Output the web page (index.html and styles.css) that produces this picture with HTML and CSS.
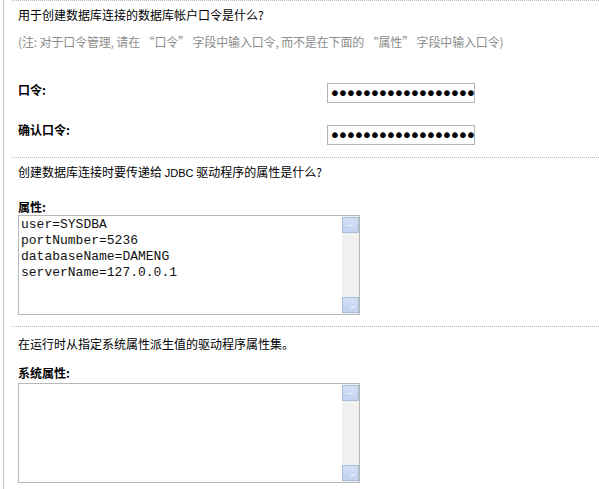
FILE: index.html
```html
<!DOCTYPE html>
<html lang="zh-CN">
<head>
<meta charset="utf-8">
<title>数据库连接属性</title>
<link rel="stylesheet" href="styles.css">
</head>
<body>
<div class="panel">
  <section class="sec sec-auth">
    <p class="question">用于创建数据库连接的数据库帐户口令是什么?</p>
    <p class="note">(注: 对于口令管理, 请在 “口令” 字段中输入口令, 而不是在下面的 “属性” 字段中输入口令)</p>
    <div class="field-row row-first">
      <label class="label" for="pw1">口令:</label>
      <input class="pw" id="pw1" type="password" value="aaaaaaaaaaaaaaaaaa">
    </div>
    <div class="field-row row-second">
      <label class="label" for="pw2">确认口令:</label>
      <input class="pw" id="pw2" type="password" value="aaaaaaaaaaaaaaaaaa">
    </div>
  </section>
  <section class="sec sec-props">
    <p class="question">创建数据库连接时要传递给 <span class="latin">JDBC</span> 驱动程序的属性是什么?</p>
    <div class="label block-label">属性:</div>
    <div class="textbox">
      <div class="textbox-content">user=SYSDBA
portNumber=5236
databaseName=DAMENG
serverName=127.0.0.1</div>
      <div class="scrollbar">
        <div class="sb-btn sb-up"><span class="arrow-up"></span></div>
        <div class="sb-track"></div>
        <div class="sb-btn sb-down"><span class="arrow-down"></span></div>
      </div>
    </div>
  </section>
  <section class="sec sec-sys">
    <p class="question">在运行时从指定系统属性派生值的驱动程序属性集。</p>
    <div class="label block-label sys-label">系统属性:</div>
    <div class="textbox">
      <div class="textbox-content"></div>
      <div class="scrollbar">
        <div class="sb-btn sb-up"><span class="arrow-up"></span></div>
        <div class="sb-track"></div>
        <div class="sb-btn sb-down"><span class="arrow-down"></span></div>
      </div>
    </div>
  </section>
</div>
</body>
</html>
```
FILE: styles.css
```css
html, body {
  margin: 0;
  padding: 0;
  background: #ffffff;
}
body {
  font-family: "Noto Sans CJK SC", "Liberation Sans", sans-serif;
  font-size: 12px;
  line-height: 16px;
  color: #000;
}
.panel {
  margin-left: 3px;
  border-left: 1px solid #c4c4c4;
  padding-left: 8px;
  min-height: 489px;
  box-sizing: border-box;
}
.sec {
  border-top: 1px dotted #b8b8b8;
  padding-left: 6px;
}
p {
  margin: 0;
}
.sec-auth {
  padding-top: 6px;
  padding-bottom: 12px;
}
.note {
  margin-top: 11px;
  color: #8c8c8c;
  letter-spacing: -0.15px;
}
.field-row {
  display: grid;
  grid-template-columns: 309px 148px;
  align-items: start;
}
.row-first {
  margin-top: 32px;
}
.row-first .pw {
  margin-top: 1px;
}
.row-second {
  margin-top: 19px;
}
.row-second .pw {
  margin-top: 3px;
}
.label {
  font-weight: bold;
}
.pw {
  margin: 0;
  box-sizing: border-box;
  width: 148px;
  height: 20px;
  border: 1px solid #b4b4b4;
  padding: 0 0 0 1px;
  font-family: "DejaVu Sans", sans-serif;
  font-size: 20px;
  letter-spacing: -3.8px;
  color: #000;
  background: #fff;
  outline: none;
}
.sec-props {
  padding-top: 6px;
  padding-bottom: 11px;
}
.latin {
  font-family: "Liberation Sans", sans-serif;
  font-size: 11px;
}
.block-label {
  margin-top: 18px;
}
.textbox {
  display: flex;
  box-sizing: border-box;
  width: 342px;
  height: 100px;
  border: 1px solid #b8b8b8;
  background: #fff;
}
.textbox-content {
  flex: 1;
  white-space: pre;
  font-family: "Liberation Mono", monospace;
  font-size: 13px;
  line-height: 16px;
  padding: 1px 0 0 2px;
  color: #111;
}
.scrollbar {
  width: 17px;
  display: flex;
  flex-direction: column;
  background: #f0f0ee;
  padding: 1px 0;
}
.sb-track {
  flex: 1;
}
.sb-btn {
  box-sizing: border-box;
  height: 16px;
  width: 17px;
  border: 1px solid #a9bbd8;
  background: linear-gradient(#d3e0f4, #c2d3ee);
  display: flex;
  align-items: center;
  justify-content: center;
}
.arrow-up {
  width: 7px;
  height: 1px;
  background: #eef3fb;
}
.arrow-down {
  width: 6px;
  height: 1px;
  background: #eef3fb;
  transform: rotate(-35deg);
  margin-top: 5px;
  margin-left: 4px;
}
.sec-sys {
  padding-top: 9px;
}
.sys-label {
  margin-top: 13px;
  margin-bottom: 2px;
}
```
